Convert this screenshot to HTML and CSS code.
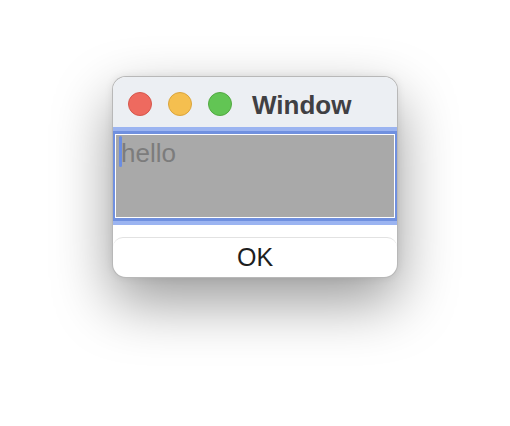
FILE: index.html
```html
<!DOCTYPE html>
<html>
<head>
<meta charset="utf-8">
<link rel="stylesheet" href="styles.css">
</head>
<body>
<div class="window">
  <div class="titlebar">
    <span class="light red"></span>
    <span class="light yellow"></span>
    <span class="light green"></span>
    <span class="title">Window</span>
  </div>
  <div class="focusring">
    <div class="textbox">
      <div class="textinner">
        <span class="caret"></span><span class="content">hello</span>
      </div>
    </div>
  </div>
  <div class="spacer"></div>
  <div class="button">OK</div>
</div>
</body>
</html>
```

FILE: styles.css
```css
html, body {
  margin: 0;
  background: #ffffff;
}
html {
  height: 100%;
}
body {
  box-sizing: border-box;
  min-height: 100%;
  height: 426px;
  padding: 76px 0 0 112px;
  font-family: "Liberation Sans", Arial, sans-serif;
}
.window {
  box-sizing: border-box;
  width: 286px;
  height: 202px;
  border: 1px solid rgba(0, 0, 0, 0.28);
  border-radius: 14px;
  overflow: hidden;
  background: #ffffff;
  box-shadow: 0 24px 58px rgba(0, 0, 0, 0.4), 0 0 8px rgba(0, 0, 0, 0.08);
  display: flex;
  flex-direction: column;
}
.titlebar {
  box-sizing: border-box;
  height: 50px;
  padding: 4px 0 0 15px;
  background: #eceff3;
  display: flex;
  align-items: center;
  gap: 16px;
}
.light {
  box-sizing: border-box;
  width: 24px;
  height: 24px;
  border-radius: 50%;
  flex: none;
}
.red { background: #ee6a5f; border: 1px solid #d6574c; }
.yellow { background: #f5bf4f; border: 1px solid #dba53c; }
.green { background: #62c554; border: 1px solid #52a941; }
.title {
  margin-left: 4px;
  font-weight: bold;
  font-size: 26px;
  color: #404043;
  line-height: 30px;
  margin-top: 1px;
}
.focusring {
  background: #9bb4f1;
  padding: 4px 0;
}
.textbox {
  border-style: solid;
  border-color: #7090df;
  border-width: 3px 2px;
}
.textinner {
  box-sizing: border-box;
  height: 84px;
  border: 1px solid #ffffff;
  background: #a9a9a9;
  display: flex;
  align-items: flex-start;
  padding: 0 0 0 3px;
}
.caret {
  flex: none;
  width: 3px;
  height: 31px;
  margin-top: 1px;
  border-radius: 2px;
  background: #6a8de2;
}
.content {
  margin-left: -1px;
  margin-top: 3px;
  font-size: 26px;
  line-height: 30px;
  color: #7c7c7c;
}
.spacer {
  height: 12px;
}
.button {
  flex: 1;
  border-top: 1px solid #e2e2e2;
  border-radius: 10px 10px 0 0;
  text-align: center;
  font-size: 25px;
  line-height: 29px;
  padding-top: 5px;
  color: #1e1e1e;
}
```
